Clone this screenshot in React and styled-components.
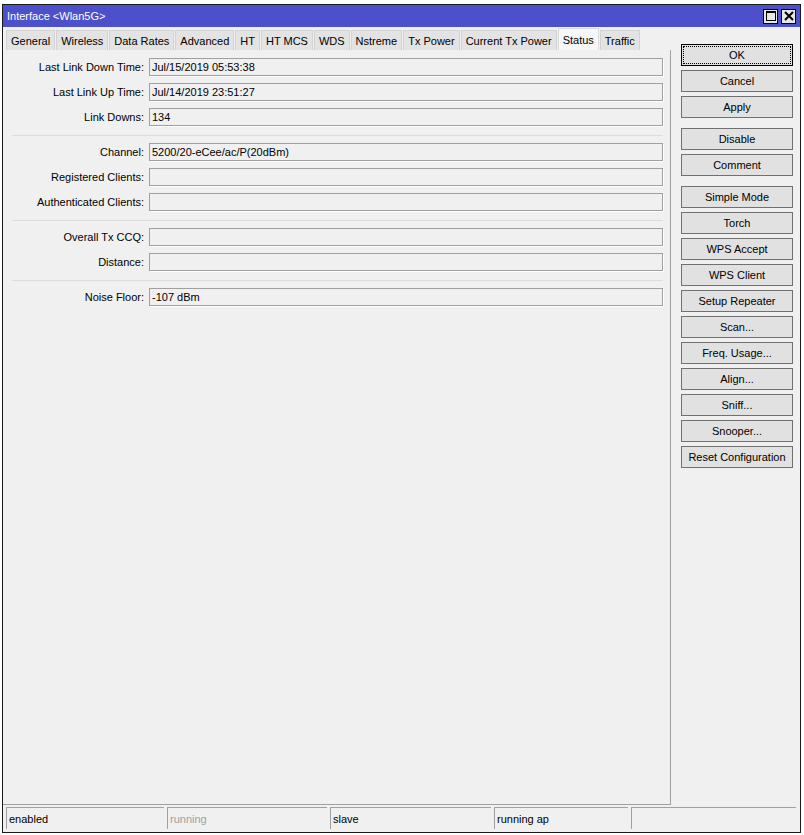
import React from 'react';
import styled, { createGlobalStyle } from 'styled-components';

const tabs = ['General', 'Wireless', 'Data Rates', 'Advanced', 'HT', 'HT MCS', 'WDS', 'Nstreme', 'Tx Power', 'Current Tx Power', 'Status', 'Traffic'];

// form groups, split by separators
const groups = [
  [
    { label: 'Last Link Down Time:', value: 'Jul/15/2019 05:53:38' },
    { label: 'Last Link Up Time:', value: 'Jul/14/2019 23:51:27' },
    { label: 'Link Downs:', value: '134' }
  ],
  [
    { label: 'Channel:', value: '5200/20-eCee/ac/P(20dBm)' },
    { label: 'Registered Clients:', value: '' },
    { label: 'Authenticated Clients:', value: '' }
  ],
  [
    { label: 'Overall Tx CCQ:', value: '' },
    { label: 'Distance:', value: '' }
  ],
  [
    { label: 'Noise Floor:', value: '-107 dBm' }
  ]
];

const buttonGroups = [
  ['OK', 'Cancel', 'Apply'],
  ['Disable', 'Comment'],
  ['Simple Mode', 'Torch', 'WPS Accept', 'WPS Client', 'Setup Repeater', 'Scan...', 'Freq. Usage...', 'Align...', 'Sniff...', 'Snooper...', 'Reset Configuration']
];

const statusCells = [
  { text: 'enabled', width: 158 },
  { text: 'running', width: 160, dim: true },
  { text: 'slave', width: 161 },
  { text: 'running ap', width: 134 },
  { text: '', width: 165 }
];

const App = () => {
  return (
    <>
      <GlobalStyle />
      <Desktop>
        <Window>
          <TitleBar>
            <TitleText>Interface &lt;Wlan5G&gt;</TitleText>
            <TitleButtons>
              <TitleButton>
                <svg width="10" height="10" viewBox="0 0 10 10">
                  <rect x="0.5" y="0.5" width="9" height="9" fill="none" stroke="#000" />
                  <line x1="0" y1="1.5" x2="10" y2="1.5" stroke="#000" />
                </svg>
              </TitleButton>
              <TitleButton>
                <svg width="10" height="10" viewBox="0 0 10 10">
                  <path d="M1 1 L9 9 M9 1 L1 9" stroke="#000" strokeWidth="2" />
                </svg>
              </TitleButton>
            </TitleButtons>
          </TitleBar>
          <Body>
            <Main>
              <LeftColumn>
                <TabStrip>
                  {tabs.map((t) => (
                    <Tab key={t} $active={t === 'Status'}>{t}</Tab>
                  ))}
                </TabStrip>
                <Panel>
                  {groups.map((rows, gi) => (
                    <React.Fragment key={gi}>
                      {gi > 0 && <Separator />}
                      {rows.map((r) => (
                        <Row key={r.label}>
                          <Label>{r.label}</Label>
                          <Field>{r.value}</Field>
                        </Row>
                      ))}
                    </React.Fragment>
                  ))}
                </Panel>
              </LeftColumn>
              <ButtonColumn>
                {buttonGroups.map((g, gi) => (
                  <ButtonGroup key={gi}>
                    {g.map((b) => (
                      <Button key={b} $default={b === 'OK'}>
                        {b === 'OK' ? <Focus>{b}</Focus> : b}
                      </Button>
                    ))}
                  </ButtonGroup>
                ))}
              </ButtonColumn>
            </Main>
            <StatusBar>
              {statusCells.map((c, i) => (
                <StatusCell key={i} $dim={c.dim} style={{ width: c.width }}>{c.text}</StatusCell>
              ))}
            </StatusBar>
          </Body>
        </Window>
      </Desktop>
    </>
  );
};

export default App;

const GlobalStyle = createGlobalStyle`
  html, body {
    margin: 0;
    padding: 0;
    background: #ffffff;
  }
  body {
    font-family: "Liberation Sans", Arial, sans-serif;
    font-size: 11px;
    color: #000;
  }
`;

const Desktop = styled.div`
  width: 804px;
  height: 835px;
  padding: 4px 0 0 2px;
  box-sizing: border-box;
  background: #ffffff;
  overflow: hidden;
`;

const Window = styled.div`
  width: 799px;
  height: 829px;
  box-sizing: border-box;
  border: 1px solid #1a1a1a;
  display: flex;
  flex-direction: column;
  background: #f0f0f0;
`;

const TitleBar = styled.div`
  height: 22px;
  background: #4d50cb;
  display: flex;
  align-items: center;
  justify-content: space-between;
  padding: 0 4px 0 4px;
  flex-shrink: 0;
`;

const TitleText = styled.div`
  color: #ffffff;
  font-size: 11px;
`;

const TitleButtons = styled.div`
  display: flex;
  gap: 3px;
`;

const TitleButton = styled.div`
  width: 15px;
  height: 15px;
  box-sizing: border-box;
  background: #e8e8e8;
  border: 1px solid #000;
  display: flex;
  align-items: center;
  justify-content: center;
`;

const Body = styled.div`
  flex: 1;
  display: flex;
  flex-direction: column;
  padding: 0 0 1px 0;
`;

const Main = styled.div`
  flex: 1;
  display: flex;
`;

const LeftColumn = styled.div`
  width: 668px;
  display: flex;
  flex-direction: column;
`;

const TabStrip = styled.div`
  display: flex;
  align-items: flex-end;
  height: 23px;
  padding-left: 3px;
`;

const Tab = styled.div`
  height: ${(p) => (p.$active ? '22px' : '20px')};
  padding: 0 4px;
  margin-right: 1px;
  display: flex;
  align-items: center;
  box-sizing: border-box;
  background: ${(p) => (p.$active ? '#f7f7f7' : '#e3e3e3')};
  border: 1px solid ${(p) => (p.$active ? '#dcdcdc' : '#d3d3d3')};
  border-bottom: none;
  font-size: 11px;
  white-space: nowrap;
`;

const Panel = styled.div`
  flex: 1;
  display: flex;
  flex-direction: column;
  gap: 7px;
  padding-top: 8px;
  border-right: 1px solid #a0a0a0;
  border-bottom: 1px solid #a0a0a0;
`;

const Row = styled.div`
  display: flex;
  align-items: center;
  height: 18px;
`;

const Label = styled.div`
  width: 143px;
  padding-right: 5px;
  text-align: right;
  font-size: 11px;
  white-space: nowrap;
  box-sizing: border-box;
  margin-left: 3px;
`;

const Field = styled.div`
  flex: 1;
  height: 18px;
  margin-right: 7px;
  box-sizing: border-box;
  border: 1px solid #a0a0a0;
  box-shadow: 1px 1px 0 #ffffff;
  padding: 0 2px;
  display: flex;
  align-items: center;
  font-size: 11px;
  background: #f0f0f0;
`;

const Separator = styled.div`
  height: 2px;
  margin: 0 7px 0 9px;
  border-bottom: 1px solid #dcdcdc;
`;

const ButtonColumn = styled.div`
  display: flex;
  flex-direction: column;
  gap: 10px;
  padding: 17px 0 0 10px;
`;

const ButtonGroup = styled.div`
  display: flex;
  flex-direction: column;
  gap: 4px;
`;

const Button = styled.div`
  width: 112px;
  height: 22px;
  box-sizing: border-box;
  border: 1px solid ${(p) => (p.$default ? '#000' : '#707070')};
  background: #e1e1e1;
  display: flex;
  align-items: center;
  justify-content: center;
  font-size: 11px;
  padding: ${(p) => (p.$default ? '1px' : '0')};
`;

const Focus = styled.div`
  width: 100%;
  height: 100%;
  box-sizing: border-box;
  border: 1px dotted #000;
  display: flex;
  align-items: center;
  justify-content: center;
`;

const StatusBar = styled.div`
  display: flex;
  gap: 3px;
  padding: 2px 0 2px 3px;
  height: 26px;
  box-sizing: border-box;
`;

const StatusCell = styled.div`
  height: 22px;
  box-sizing: border-box;
  border-top: 1px solid #a0a0a0;
  border-left: 1px solid #a0a0a0;
  padding: 0 2px;
  display: flex;
  align-items: center;
  font-size: 11px;
  color: ${(p) => (p.$dim ? '#a0a0a0' : '#000')};
`;
